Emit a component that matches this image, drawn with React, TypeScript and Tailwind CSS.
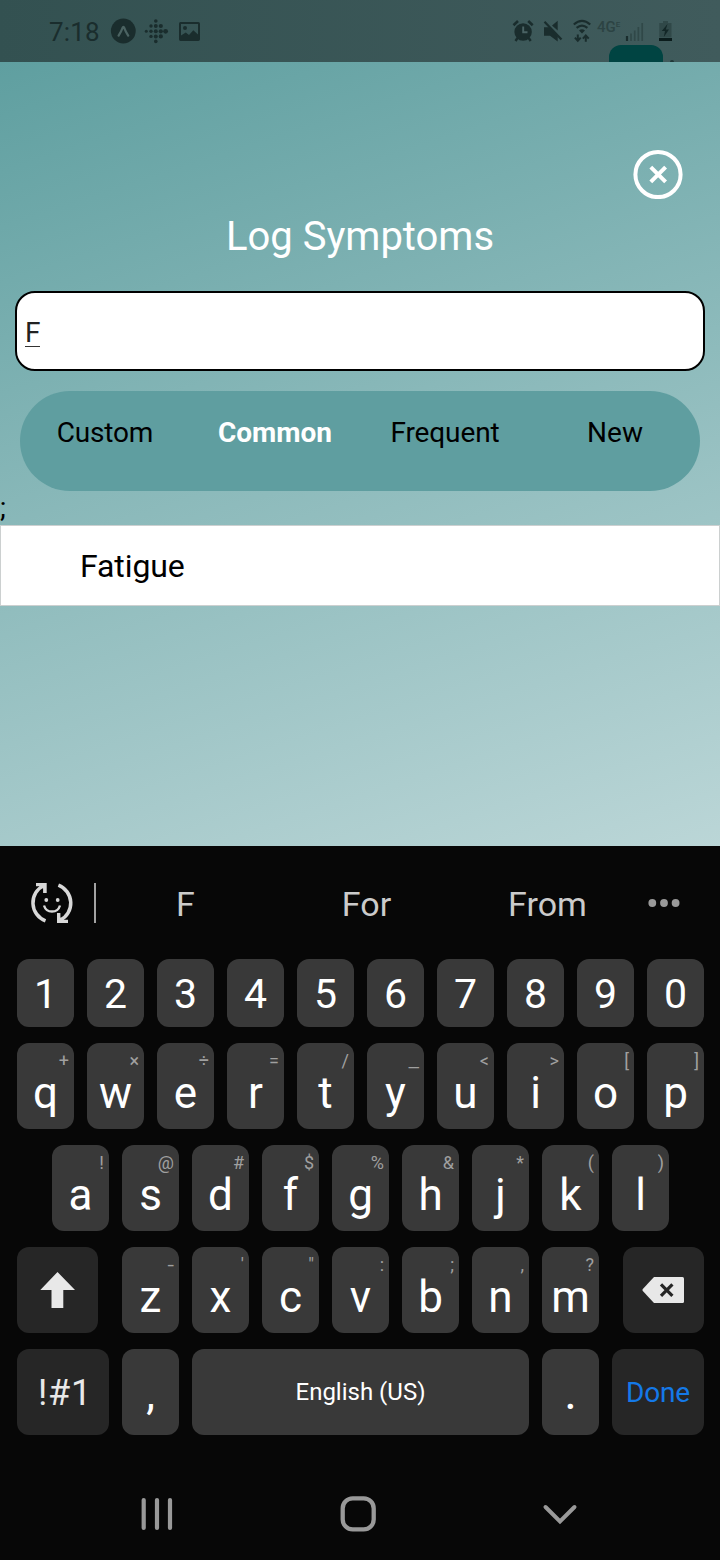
import React from "react";

type Key = [label: string, hint?: string];

const numberRow: Key[] = ["1", "2", "3", "4", "5", "6", "7", "8", "9", "0"].map((n) => [n]);
const topRow: Key[] = [["q", "+"], ["w", "×"], ["e", "÷"], ["r", "="], ["t", "/"], ["y", "_"], ["u", "<"], ["i", ">"], ["o", "["], ["p", "]"]];
const homeRow: Key[] = [["a", "!"], ["s", "@"], ["d", "#"], ["f", "$"], ["g", "%"], ["h", "&"], ["j", "*"], ["k", "("], ["l", ")"]];
const bottomRow: Key[] = [["z", "-"], ["x", "'"], ["c", '"'], ["v", ":"], ["b", ";"], ["n", ","], ["m", "?"]];

function LetterKey({ label, hint }: { label: string; hint?: string }) {
  const wide = hint === "-" || hint === "_";
  return (
    <div className="relative flex h-[86px] w-[57px] items-center justify-center rounded-[12px] bg-[#393939] pt-[14px] text-[44px] text-white">
      <span className="h-[44px] leading-[44px]">{label}</span>
      {hint && (
        <span className={`absolute top-[9px] right-[5px] text-[18px] leading-[18px] text-[#a0a0a0] ${wide ? "origin-right scale-x-130" : ""}`}>
          {hint}
        </span>
      )}
    </div>
  );
}

function StatusBar() {
  return (
    <header className="relative flex h-[62px] items-start overflow-hidden bg-linear-to-r from-[#335151] to-[#405b5c] text-[#1a2d2d]">
      <span className="mt-[17px] ml-[49px] w-[61px] text-[26px] leading-[30px] tracking-[0.2px]">7:18</span>
      <svg viewBox="110 18 26 26" className="mt-[18px] h-[26px] w-[26px]" fill="none">
        <circle cx="123.3" cy="31" r="12.4" fill="currentColor" />
        <path d="M118.6 35.6 Q121.3 31.5 122.5 28 Q123.4 25.8 124.3 28 Q125.5 31.5 128.2 35.6" stroke="#4b6362" strokeWidth="2.3" strokeLinecap="round" />
      </svg>
      <svg viewBox="144 19 25 25" className="mt-[19px] ml-2 h-[25px] w-[25px]" fill="currentColor">
        <circle cx="146.3" cy="31.3" r="1.5" />
        <circle cx="151" cy="26" r="1.7" /><circle cx="151" cy="31.3" r="1.7" /><circle cx="151" cy="36.4" r="1.7" />
        <circle cx="155.8" cy="21" r="1.8" /><circle cx="155.8" cy="26" r="2" /><circle cx="155.8" cy="31.3" r="2" /><circle cx="155.8" cy="36.4" r="2" /><circle cx="155.8" cy="41.4" r="1.8" />
        <circle cx="160.8" cy="26" r="2.1" /><circle cx="160.8" cy="31.3" r="2.1" /><circle cx="160.8" cy="36.4" r="2.1" />
        <circle cx="165.6" cy="31.3" r="2.4" />
      </svg>
      <svg viewBox="178 21 23 22" className="mt-[21px] ml-[9px] h-[22px] w-[23px]" fill="currentColor">
        <path fillRule="evenodd" d="M180.5 22 H198.3 Q200 22 200 23.7 V39.3 Q200 41 198.3 41 H180.5 Q179 41 179 39.3 V23.7 Q179 22 180.5 22 Z M181 24 V35.5 L185.8 32.5 L189 35 L193.3 30.3 L198 34.5 V24 Z" />
        <circle cx="185" cy="28" r="2" />
      </svg>
      <svg viewBox="512 19 23 24" className="mt-[19px] ml-[311px] h-[24px] w-[23px]" fill="none" stroke="currentColor">
        <circle cx="523.1" cy="32" r="8.7" fill="currentColor" stroke="none" />
        <path d="M513.5 25.2 L518 21 M532.7 25.2 L528.2 21" strokeWidth="2.6" />
        <path d="M517.5 38 L515.5 41 M528.7 38 L530.7 41" strokeWidth="2.4" />
        <path d="M523.2 26.5 V32.2 H527.5" stroke="#4a6364" strokeWidth="1.9" />
      </svg>
      <svg viewBox="542 19 22 24" className="mt-[19px] ml-[7px] h-[24px] w-[22px]" fill="currentColor">
        <path d="M544 27.3 H549 L557.7 36 V41.5 L550 35.8 H544 Z" />
        <path d="M552 25.5 L557.7 20.7 V30.5 Z" />
        <path d="M544.5 21.8 L561.5 39.5" fill="none" stroke="currentColor" strokeWidth="2.2" />
      </svg>
      <svg viewBox="572 19 21 24" className="mt-[19px] ml-2 h-[24px] w-[21px]" fill="none" stroke="currentColor" strokeWidth="2.2">
        <path d="M573.8 24.5 Q582 17.2 590.2 24.5 M576.6 27.8 Q582 23.3 587.4 27.8" />
        <path d="M579 30.5 Q582 28.2 585 30.5 L582 33.6 Z" fill="currentColor" stroke="none" />
        <path d="M577.8 34.5 V40 M574.9 37.6 L577.8 40.8 L580.7 37.6 M585.8 41.7 V36 M582.9 38.6 L585.8 35.4 L588.7 38.6" strokeWidth="2" />
      </svg>
      <span className="mt-[19px] ml-[4px] flex w-[27px] items-start text-[15px] leading-4 font-medium text-[#2c4343]">
        4G<small className="mt-px text-[8px] leading-[10px]">E</small>
      </span>
      <svg viewBox="626 22 19 20" className="mt-[22px] ml-[1px] h-[20px] w-[19px]" strokeWidth="1.7">
        <path d="M628 36 V41" stroke="#1a2d2d" strokeWidth="2.2" />
        <path d="M632 33.5 V41 M635.7 30.5 V41 M639.4 27 V41 M643.2 23 V41" stroke="#304848" />
      </svg>
      <svg viewBox="658 20 15 22" className="mt-[20px] ml-[14px] h-[22px] w-[15px]">
        <path d="M663 21 H668 V23 H671.5 V37.5 H659.3 V23 H663 Z" fill="#304848" />
        <path d="M659 38 H672 V41 H659 Z" fill="#0b1c1c" />
        <path d="M667.5 24 L661.8 31 H665 L663.8 37 L669 29.5 H665.8 Z" fill="#132727" />
      </svg>
      <div className="absolute top-[45px] left-[609px] h-[30px] w-[54px] rounded-[12px] bg-[#004442]" />
      <div className="absolute top-[60px] left-[670px] h-1 w-1 rounded-full bg-[#1f3636]" />
    </header>
  );
}

function SymptomModal() {
  return (
    <main className="flex h-[784px] flex-col bg-[linear-gradient(162deg,#5f9fa0_0%,#bbd6d7_100%)]">
      <button className="mt-[87px] ml-[633px] h-[50px] w-[50px]" aria-label="Close">
        <svg viewBox="0 0 50 50" className="h-[50px] w-[50px]" fill="none" stroke="white">
          <circle cx="25" cy="25.5" r="22.6" strokeWidth="4" />
          <path d="M17.8 18.1 L32.6 32.9 M32.6 18.1 L17.8 32.9" strokeWidth="4" />
        </svg>
      </button>
      <h1 className="mt-[13px] text-center text-[40px] leading-[50px] text-white">Log Symptoms</h1>
      <div className="mx-[15px] mt-[29px] flex h-[80px] items-center rounded-[20px] border-2 border-black bg-white pl-2 text-[28px] leading-none text-[#222]">
        <span className="mt-[4px] border-b border-[#333] leading-[26px]">F</span>
      </div>
      <nav className="mx-[20px] mt-[20px] grid h-[100px] grid-cols-4 rounded-[50px] bg-[#5f9ea0] pt-[25px] text-center text-[28px] leading-[33px] text-black">
        <span className="tracking-[-0.2px]">Custom</span>
        <span className="font-bold text-white">Common</span>
        <span className="tracking-[-0.1px]">Frequent</span>
        <span>New</span>
      </nav>
      <div className="h-[34px] text-[28px] leading-[34px] text-black">;</div>
      <div className="flex h-[81px] items-center border border-[#ccd0d0] bg-white pt-px pl-[79px] text-[32px] text-black">
        <span className="leading-[40px] tracking-[-0.1px]">Fatigue</span>
      </div>
    </main>
  );
}

function Suggestions() {
  return (
    <div className="flex h-[113px] items-center text-[34px] text-[#cbcbcb]">
      <svg viewBox="28 880 48 46" className="ml-[28px] h-[46px] w-[48px]" fill="none" stroke="#d8d8d8" strokeWidth="3.5">
        <path d="M45.5 920.8 A19.2 19.2 0 0 1 43.8 885.5" />
        <path d="M58.4 885.2 A19.2 19.2 0 0 1 60 920.4" />
        <path d="M36 883 H46.7 V893 H43.1 V888.5 L39 886.2 H36 Z M57 913 H60.4 V917.5 L64 919.8 H68 V923 H57 Z" fill="#d8d8d8" stroke="none" />
        <circle cx="46.3" cy="900" r="1.9" fill="#d8d8d8" stroke="none" />
        <circle cx="57.7" cy="900" r="1.9" fill="#d8d8d8" stroke="none" />
        <path d="M44 905.5 C46.5 913.6 57.5 913.6 60 905.5" strokeWidth="2.4" />
      </svg>
      <div className="ml-[18px] h-[40px] w-[2px] bg-[#a2a2a2]" />
      <div className="-ml-px grid w-[543px] grid-cols-3 pt-[2px] text-center leading-[40px]">
        <span>F</span>
        <span>For</span>
        <span>From</span>
      </div>
      <svg viewBox="0 0 34 10" className="ml-[9px] h-[10px] w-[34px]" fill="#999">
        <circle cx="5.3" cy="5" r="3.9" /><circle cx="17" cy="5" r="3.9" /><circle cx="28.6" cy="5" r="3.9" />
      </svg>
    </div>
  );
}

function Keyboard() {
  return (
    <section className="h-[714px] bg-[#070707]">
      <Suggestions />
      <div className="flex flex-col gap-4 pr-[16px] pl-[17px]">
        <div className="flex gap-[13px]">
          {numberRow.map(([n]) => (
            <div key={n} className="flex h-[68px] w-[57px] items-center justify-center rounded-[12px] bg-[#393939] pt-[2px] text-[41px] leading-none text-white">{n}</div>
          ))}
        </div>
        <div className="flex gap-[13px]">
          {topRow.map(([k, h]) => <LetterKey key={k} label={k} hint={h} />)}
        </div>
        <div className="flex gap-[13px] pl-[35px]">
          {homeRow.map(([k, h]) => <LetterKey key={k} label={k} hint={h} />)}
        </div>
        <div className="flex justify-between">
          <div className="flex h-[86px] w-[81px] items-center justify-center rounded-[12px] bg-[#262626]">
            <svg viewBox="0 0 36 38" className="h-[38px] w-[36px]" fill="#e8e8e8">
              <path d="M17.5 1 L35 19 H23.3 V37 H11.5 V19 H0.3 Z" />
            </svg>
          </div>
          <div className="flex gap-[13px]">
            {bottomRow.map(([k, h]) => <LetterKey key={k} label={k} hint={h} />)}
          </div>
          <div className="flex h-[86px] w-[81px] items-center justify-center rounded-[12px] bg-[#262626] pr-[2px]">
            <svg viewBox="0 0 42 26" className="h-[26px] w-[42px]">
              <path d="M12 0 H40.5 Q42 0 42 1.5 V24.5 Q42 26 40.5 26 H12 L0.8 14 Q0 13 0.8 12 Z" fill="#e8e8e8" />
              <path d="M19 7.4 L30.4 18.8 M30.4 7.4 L19 18.8" stroke="#262626" strokeWidth="3.2" />
            </svg>
          </div>
        </div>
        <div className="flex gap-[13px] leading-none">
          <div className="flex h-[86px] w-[92px] items-center justify-center rounded-[12px] bg-[#262626] pt-[2px] pl-[4px] text-[36px] tracking-[0.8px] text-[#e8e8e8]">!#1</div>
          <div className="flex h-[86px] w-[57px] items-center justify-center rounded-[12px] bg-[#393939] pt-[4px] text-[44px] text-white">,</div>
          <div className="flex h-[86px] w-[337px] items-center justify-center rounded-[12px] bg-[#393939] text-[24px] text-white">English (US)</div>
          <div className="flex h-[86px] w-[57px] items-center justify-center rounded-[12px] bg-[#393939] pt-[2px] text-[48px] text-white">.</div>
          <div className="flex h-[86px] w-[92px] items-center justify-center rounded-[12px] bg-[#262626] pt-[2px] text-[28px] tracking-[-0.2px] text-[#1479e8]">Done</div>
        </div>
      </div>
      <div className="mt-[59px] flex h-[40px] items-center pl-[139px]">
        <svg viewBox="0 0 36 40" className="h-[40px] w-[36px]" stroke="#999" strokeWidth="4.2" strokeLinecap="round">
          <path d="M4.7 6 V34 M18 6 V34 M31 6 V34" />
        </svg>
        <svg viewBox="0 0 40 40" className="ml-[163px] h-[40px] w-[40px]" fill="none" stroke="#999" strokeWidth="4.3">
          <rect x="4.7" y="4.4" width="31" height="31" rx="10" />
        </svg>
        <svg viewBox="0 0 40 40" className="ml-[162px] h-[40px] w-[40px]" fill="none" stroke="#999" strokeWidth="4" strokeLinecap="round">
          <path d="M5.5 13 L20 27.5 L34.5 13" />
        </svg>
      </div>
    </section>
  );
}

export default function App() {
  return (
    <div className="h-[1560px] w-[720px] overflow-hidden font-[Roboto,sans-serif]">
      <StatusBar />
      <SymptomModal />
      <Keyboard />
    </div>
  );
}
